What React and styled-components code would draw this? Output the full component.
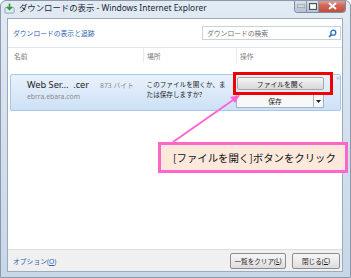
import React from 'react';
import styled, { createGlobalStyle } from 'styled-components';

const GlobalStyle = createGlobalStyle`
  html, body { margin: 0; padding: 0; background: #ffffff; }
  body { font-family: "Noto Sans", "Noto Sans CJK JP", sans-serif; }
  * { box-sizing: border-box; }
`;

const JP = `"Noto Sans", "Noto Sans CJK JP", sans-serif`;

const App = () => {
    return (
        <>
            <GlobalStyle />
            <Window>
                <TitleBar>
                    <TitleIcon viewBox="0 0 12 12">
                        <rect x="1" y="5" width="10" height="6" rx="1" fill="#dfe9f5" stroke="#6d8db3" strokeWidth="0.8" />
                        <path d="M6 0.5 V6.5 M3.3 4.2 L6 7 L8.7 4.2" stroke="#2f9a3a" strokeWidth="1.8" fill="none" />
                    </TitleIcon>
                    <TitleText>ダウンロードの表示 - Windows Internet Explorer</TitleText>
                    <Controls>
                        <CtrlButton>
                            <svg width="8" height="4" viewBox="0 0 8 4"><rect x="0" y="1" width="8" height="2" fill="#fff" stroke="#555" strokeWidth="0.5" /></svg>
                        </CtrlButton>
                        <CtrlButton>
                            <svg width="8" height="7" viewBox="0 0 8 7"><rect x="0.5" y="0.5" width="7" height="6" fill="none" stroke="#555" strokeWidth="1" /><rect x="1.5" y="2" width="5" height="3.5" fill="#fff" /></svg>
                        </CtrlButton>
                        <CloseButton>
                            <svg width="9" height="8" viewBox="0 0 9 8"><path d="M1 1 L8 7 M8 1 L1 7" stroke="#fff" strokeWidth="2" /></svg>
                        </CloseButton>
                    </Controls>
                </TitleBar>

                <Client>
                    <TopRow>
                        <Link>ダウンロードの表示と追跡</Link>
                        <SearchBox>
                            <span>ダウンロードの検索</span>
                            <svg width="9" height="9" viewBox="0 0 9 9">
                                <circle cx="5.3" cy="3.7" r="2.5" fill="none" stroke="#2a6fc9" strokeWidth="1.3" />
                                <path d="M3.6 5.4 L1 8" stroke="#2a6fc9" strokeWidth="1.6" />
                            </svg>
                        </SearchBox>
                    </TopRow>
                    <ColumnHeader>
                        <ColLabel $w={133}>名前</ColLabel>
                        <ColLabel $w={93} $line>場所</ColLabel>
                        <ColLabel $line>操作</ColLabel>
                    </ColumnHeader>

                    <List>
                        <Item>
                            <NameCol>
                                <NameLine>
                                    <FileName>Web Ser…  .cer</FileName>
                                    <Size>873 バイト</Size>
                                </NameLine>
                                <Host>ebrra.ebara.com</Host>
                            </NameCol>
                            <Question>このファイルを開くか、ま<br />たは保存しますか?</Question>
                            <Actions>
                                <OpenButton>ファイルを開く</OpenButton>
                                <SaveButton>
                                    <span>保存</span>
                                    <Drop>
                                        <svg width="5" height="3" viewBox="0 0 5 3"><path d="M0 0 H5 L2.5 3 Z" fill="#222" /></svg>
                                    </Drop>
                                </SaveButton>
                                <Highlight />
                            </Actions>
                            <Dismiss>×</Dismiss>
                        </Item>
                    </List>

                    <Footer>
                        <Link>オプション(<u>O</u>)</Link>
                        <FooterButtons>
                            <FooterButton $w={56}>一覧をクリア(<u>L</u>)</FooterButton>
                            <FooterButton $w={48}>閉じる(<u>C</u>)</FooterButton>
                        </FooterButtons>
                    </Footer>
                </Client>

                <Arrow width="351" height="278" viewBox="0 0 351 278">
                    <path d="M173 142 L236 98" stroke="#ff66d4" strokeWidth="2" />
                    <path d="M240 95 L230 97 L235 103 Z" fill="#ff66d4" />
                </Arrow>
                <Callout>[ファイルを開く]ボタンをクリック</Callout>
            </Window>
        </>
    );
};

export default App;

const Window = styled.div`
    position: relative;
    width: 351px;
    height: 278px;
    display: flex;
    flex-direction: column;
    padding: 0 7px 5px 6px;
    background: linear-gradient(180deg, #e2eaf3 0%, #d6e1ee 40%, #c8d7e8 100%);
    border: 1px solid #8a99ab;
    border-radius: 6px 6px 0 0;
    overflow: hidden;
`
const TitleBar = styled.div`
    height: 17px;
    display: flex;
    align-items: flex-start;
    margin: 0 -7px 0 -6px;
    padding-left: 3px;
`
const TitleIcon = styled.svg`
    width: 11px;
    height: 11px;
    margin-top: 2px;
`
const TitleText = styled.div`
    margin-left: 4px;
    margin-top: 1px;
    font-family: ${JP};
    font-size: 8.4px;
    line-height: 12px;
    color: #1b2a3a;
    flex: 1;
    white-space: nowrap;
`
const Controls = styled.div`
    display: flex;
    margin-right: 4px;
    margin-top: -1px;
    border: 1px solid #7d8ea3;
    border-top: none;
    border-radius: 0 0 4px 4px;
    overflow: hidden;
`
const CtrlButton = styled.div`
    width: 12px;
    height: 12px;
    display: flex;
    align-items: center;
    justify-content: center;
    background: linear-gradient(180deg, #dfe6ee 0%, #c3cfdc 50%, #b4c2d2 100%);
    border-right: 1px solid #8796a8;
`
const CloseButton = styled.div`
    width: 26px;
    height: 12px;
    display: flex;
    align-items: center;
    justify-content: center;
    background: linear-gradient(180deg, #e6a89e 0%, #d0685a 45%, #c44b3c 100%);
`
const Client = styled.div`
    flex: 1;
    display: flex;
    flex-direction: column;
    background: #ffffff;
    border: 1px solid #9aabbf;
`
const TopRow = styled.div`
    height: 28px;
    display: flex;
    align-items: center;
    justify-content: space-between;
    padding: 0 1px 0 5px;
`
const Link = styled.div`
    font-family: ${JP};
    font-size: 6.8px;
    color: #2a62b8;
    white-space: nowrap;
    u { text-decoration: underline; }
`
const SearchBox = styled.div`
    width: 139px;
    height: 14px;
    display: flex;
    align-items: center;
    justify-content: space-between;
    padding: 0 3px 0 4px;
    border: 1px solid #c9d1db;
    font-family: ${JP};
    font-size: 6.8px;
    color: #707070;
`
const ColumnHeader = styled.div`
    height: 16px;
    display: flex;
    align-items: center;
    border-top: 1px solid #dbe6f3;
    padding-left: 2px;
`
const ColLabel = styled.div`
    width: ${(props) => (props.$w ? `${props.$w}px` : 'auto')};
    height: 100%;
    display: flex;
    align-items: center;
    padding-left: ${(props) => (props.$line ? '3px' : '4px')};
    border-left: ${(props) => (props.$line ? '1px solid #e6ecf3' : 'none')};
    font-family: ${JP};
    font-size: 6.8px;
    color: #7a7a7a;
`
const List = styled.div`
    flex: 1;
    padding: 11px 1px 0 2px;
`
const Item = styled.div`
    position: relative;
    height: 37px;
    display: flex;
    padding-left: 16px;
    background: linear-gradient(180deg, #e9f2fc 0%, #dbe9f9 50%, #cde1f6 100%);
    border: 1px solid #a8c6ea;
    border-radius: 2px;
`
const NameCol = styled.div`
    width: 120px;
    padding-top: 3px;
    display: flex;
    flex-direction: column;
`
const NameLine = styled.div`
    display: flex;
    align-items: baseline;
    gap: 11px;
`
const FileName = styled.span`
    font-family: ${JP};
    font-size: 9.2px;
    color: #1e1e1e;
    white-space: pre;
`
const Size = styled.span`
    font-family: ${JP};
    font-size: 6.8px;
    color: #8a8a8a;
`
const Host = styled.div`
    margin-top: 1px;
    font-family: ${JP};
    font-size: 6.8px;
    color: #8a8a8a;
`
const Question = styled.div`
    width: 91px;
    padding-top: 5px;
    font-family: ${JP};
    font-size: 6.6px;
    line-height: 10px;
    color: #1e1e1e;
    white-space: nowrap;
`
const Actions = styled.div`
    position: relative;
    width: 87px;
    padding-top: 2px;
    display: flex;
    flex-direction: column;
    gap: 4px;
`
const OpenButton = styled.div`
    height: 13px;
    display: flex;
    align-items: center;
    justify-content: center;
    background: linear-gradient(180deg, #f6f6f6 0%, #e6e6e6 50%, #d9d9d9 100%);
    border: 1px solid #a8a8a8;
    border-radius: 2px;
    font-family: ${JP};
    font-size: 6.8px;
    color: #1e1e1e;
`
const SaveButton = styled.div`
    height: 14px;
    margin-left: -1px;
    display: flex;
    background: #f8f8f8;
    border: 1px solid #9fb3cc;
    font-family: ${JP};
    font-size: 6.8px;
    color: #1e1e1e;
    span {
        flex: 1;
        display: flex;
        align-items: center;
        justify-content: center;
    }
`
const Drop = styled.div`
    width: 10px;
    display: flex;
    align-items: center;
    justify-content: center;
    border-left: 1px solid #9fb3cc;
`
const Highlight = styled.div`
    position: absolute;
    left: -4px;
    top: -3px;
    width: 100px;
    height: 23px;
    border: 3px solid #f00000;
`
const Dismiss = styled.div`
    margin-left: 12px;
    margin-top: -1px;
    font-family: ${JP};
    font-size: 7px;
    color: #a8b4c2;
`
const Footer = styled.div`
    height: 22px;
    display: flex;
    align-items: center;
    justify-content: space-between;
    padding: 0 2px 0 5px;
    background: #f0f0f0;
    border-top: 1px solid #dedede;
`
const FooterButtons = styled.div`
    display: flex;
    gap: 6px;
`
const FooterButton = styled.div`
    width: ${(props) => props.$w}px;
    height: 16px;
    display: flex;
    align-items: center;
    justify-content: center;
    background: linear-gradient(180deg, #f7f7f7 0%, #ebebeb 50%, #dcdcdc 100%);
    border: 1px solid #8e8e8e;
    border-radius: 2px;
    font-family: ${JP};
    font-size: 6.6px;
    color: #1e1e1e;
    white-space: nowrap;
    u { text-decoration: underline; }
`
const Arrow = styled.svg`
    position: absolute;
    left: -1px;
    top: -1px;
    pointer-events: none;
`
const Callout = styled.div`
    position: absolute;
    left: 157px;
    top: 141px;
    width: 190px;
    height: 31px;
    display: flex;
    align-items: center;
    padding-left: 12px;
    background: #fde9dc;
    border: 3px solid #ff66cc;
    font-family: "Noto Sans CJK JP", sans-serif;
    font-size: 10.4px;
    color: #111;
    white-space: nowrap;
`
